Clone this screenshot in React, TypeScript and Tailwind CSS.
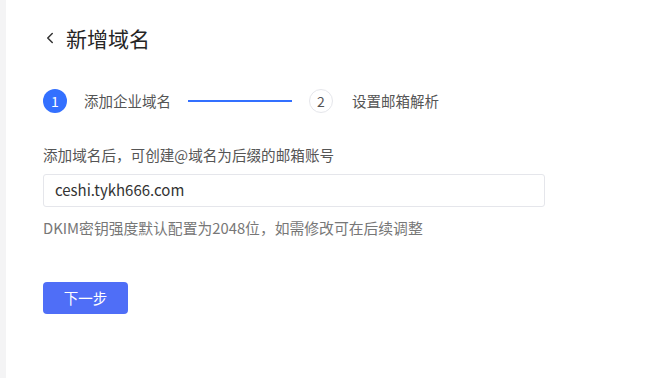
import { ChevronLeft } from "lucide-react";

const font = { fontFamily: '"Noto Sans CJK SC", "Noto Sans", sans-serif' };

export default function App() {
  return (
    <div className="w-[651px] h-[378px] flex bg-white overflow-hidden" style={font}>
      <div className="w-[6px] bg-[#f4f4f5]" />
      <div className="flex-1 flex flex-col pl-[37px]">
        <div className="flex items-center h-[30px] mt-[23px]">
          <ChevronLeft className="-ml-[2px] w-[18px] h-[18px] text-[#333]" strokeWidth={2} />
          <h1 className="ml-[7px] text-[21px] leading-[30px] text-[#262626]">新增域名</h1>
        </div>

        <div className="flex items-center mt-[36px] h-[24px]">
          <div className="w-6 h-6 rounded-full bg-[#3370ff] text-white text-[14px] flex items-center justify-center">1</div>
          <span className="ml-[17px] text-[14.5px] text-[#555]">添加企业域名</span>
          <div className="ml-[17px] w-[104px] h-[2px] bg-[#3370ff]" />
          <div className="ml-[17px] w-6 h-6 rounded-full border border-[#e5e6eb] text-[14px] text-[#555] flex items-center justify-center">2</div>
          <span className="ml-[19px] text-[14.5px] text-[#555]">设置邮箱解析</span>
        </div>

        <p className="mt-[32px] text-[14.6px] leading-[20px] text-[#555]">添加域名后，可创建@域名为后缀的邮箱账号</p>
        <div className="mt-[9px] w-[502px] h-[33px] border border-[#e5e6eb] rounded-[3px] flex items-center pl-[11px] text-[15px] text-[#333]">
          ceshi.tykh666.com
        </div>
        <p className="mt-[11px] text-[14.8px] leading-[20px] text-[#777]">DKIM密钥强度默认配置为2048位，如需修改可在后续调整</p>

        <button className="mt-[44px] w-[85px] h-[32px] rounded-[4px] bg-[#4f6ef7] text-white text-[14.5px]">下一步</button>
      </div>
    </div>
  );
}
